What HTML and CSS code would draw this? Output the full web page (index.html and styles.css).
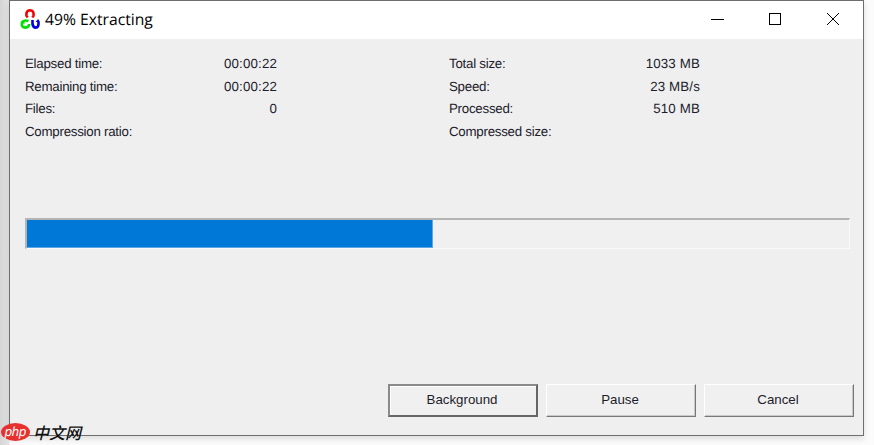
FILE: index.html
```html
<!DOCTYPE html>
<html lang="en">
<head>
    <meta charset="UTF-8">
    <title>49% Extracting</title>
    <link rel="stylesheet" href="styles.css">
</head>
<body>

<div class="window">
    <div class="titlebar">
        <svg class="app-icon" width="20" height="20" viewBox="0 0 20 20" fill="none" stroke-width="2.6">
            <path d="M7.500 8.500 L6.500 6.500 Q5.800 1.500 10 1.300 Q14.200 1.500 13.500 6.500 L12.500 8.500" stroke="#f00000"/>
            <path d="M8.500 12 Q3.500 10.500 2 13.500 Q0.800 18.500 5.500 18.600 Q9 18.500 9.200 15" stroke="#00e000"/>
            <path d="M1 12.500 L4.500 11 L4.500 15.500 Z" fill="#00e000" stroke="none"/>
            <path d="M12.500 11 L12.500 15 Q13 18.600 15.800 18.600 Q18.500 18.500 18.500 15 L18.500 13" stroke="#0000e0"/>
            <path d="M15.500 13 L20 13 L18.200 10 Z" fill="#0000e0" stroke="none"/>
        </svg>
        <span class="title">49% Extracting</span>
        <div class="controls">
            <svg class="control" width="46" height="30" viewBox="0 0 46 30"><path d="M17 15.500H30" stroke="#000"/></svg>
            <svg class="control" width="46" height="30" viewBox="0 0 46 30" fill="none"><rect x="17.500" y="9.500" width="11" height="11" stroke="#000"/></svg>
            <svg class="control" width="46" height="30" viewBox="0 0 46 30"><path d="M17 9L29 21M29 9L17 21" stroke="#000"/></svg>
        </div>
    </div>

    <div class="content">
        <div class="stats">
            <div class="stat-col">
                <div class="stat"><span class="stat-label">Elapsed time:</span><span class="stat-value">00:00:22</span></div>
                <div class="stat"><span class="stat-label">Remaining time:</span><span class="stat-value">00:00:22</span></div>
                <div class="stat"><span class="stat-label">Files:</span><span class="stat-value">0</span></div>
                <div class="stat"><span class="stat-label">Compression ratio:</span></div>
            </div>
            <div class="stat-col stat-col-right">
                <div class="stat"><span class="stat-label">Total size:</span><span class="stat-value">1033 MB</span></div>
                <div class="stat"><span class="stat-label">Speed:</span><span class="stat-value">23 MB/s</span></div>
                <div class="stat"><span class="stat-label">Processed:</span><span class="stat-value">510 MB</span></div>
                <div class="stat"><span class="stat-label">Compressed size:</span></div>
            </div>
        </div>

        <div class="progress">
            <div class="progress-fill" style="width: 49.4%"></div>
        </div>

        <div class="buttons">
            <button class="btn btn-default">Background</button>
            <button class="btn">Pause</button>
            <button class="btn">Cancel</button>
        </div>
    </div>
</div>

<div class="watermark">
    <span class="php-logo">php</span>
    <span class="php-text">中文网</span>
</div>

</body>
</html>
```

FILE: styles.css
```css
html, body {
    height: 100%;
}
body {
    margin: 0;
    padding: 0 10px 0 9px;
    box-sizing: border-box;
    height: 445px;
    overflow: hidden;
    background: linear-gradient(to right, #d4d4d4 0, #e4e4e4 9px, #fbfbfb 10px);
    font-family: "Liberation Sans", sans-serif;
    color: #1c1c2c;
    text-rendering: geometricPrecision;
}
.window {
    height: 436px;
    box-sizing: border-box;
    border: 1px solid #6e6e6e;
    background-color: #efefef;
    display: flex;
    flex-direction: column;
    box-shadow: 0 3px 6px rgba(0, 0, 0, 0.12);
}
.titlebar {
    height: 38px;
    flex: none;
    background-color: #fff;
    display: flex;
    align-items: center;
    padding: 0 0 2px 10px;
    box-sizing: border-box;
    color: #000;
}
.app-icon {
    flex: none;
}
.title {
    margin-left: 5px;
    font-family: "Open Sans", sans-serif;
    font-size: 15.7px;
}
.controls {
    margin-left: auto;
    display: flex;
    gap: 12px;
    padding-right: 7px;
}
.control {
    display: block;
}
.content {
    flex: 1;
    display: flex;
    flex-direction: column;
    padding: 14px 9px 18px 15px;
}
.stats {
    display: flex;
    gap: 172px;
    height: 165px;
}
.stat-col {
    width: 252px;
}
.stat-col-right {
    width: 251px;
}
.stat {
    display: flex;
    justify-content: space-between;
    height: 22.5px;
    line-height: 22.5px;
    font-size: 13.3px;
}
.stat-label {
    letter-spacing: -0.25px;
}
.stat-value {
    letter-spacing: 0.15px;
}
.progress {
    height: 31px;
    width: 825px;
    box-sizing: border-box;
    border: 2px solid #f9f9f9;
    border-top-color: #b4b4b4;
    border-left-color: #b4b4b4;
    border-right-width: 1px;
    border-bottom-width: 1px;
    background-color: #f0f0f0;
}
.progress-fill {
    height: 28px;
    box-sizing: border-box;
    background-color: #0078d7;
    border-right: 1px solid #5aa9e6;
    border-bottom: 1px solid #5aa9e6;
}
.buttons {
    margin-top: auto;
    display: flex;
    justify-content: flex-end;
    gap: 8px;
}
.btn {
    width: 150px;
    height: 33px;
    padding: 0 2px 2px 0;
    font-family: inherit;
    font-size: 13.3px;
    color: #1c1c2c;
    background-color: #f0f0f0;
    border: 1px solid #fff;
    border-right-color: #777;
    border-bottom-color: #777;
    box-shadow: inset -1px -1px 0 #c8c8c8;
}
.btn-default {
    border: 2px solid #666;
    border-top-color: #8a8a8a;
    border-left-color: #8a8a8a;
    box-shadow: inset 1px 1px 0 #fff;
}
.watermark {
    position: absolute;
    left: 1px;
    top: 423px;
    display: flex;
    align-items: center;
    gap: 3px;
}
.php-logo {
    width: 29px;
    height: 18px;
    border-radius: 50%;
    background-color: #e8312f;
    color: #fff;
    font-family: "Liberation Sans", sans-serif;
    font-style: italic;
    font-size: 13px;
    line-height: 17px;
    text-align: center;
}
.php-text {
    font-family: "Noto Sans CJK SC", sans-serif;
    font-weight: 500;
    font-style: italic;
    font-size: 16px;
    line-height: 18px;
    color: #111;
}
```
